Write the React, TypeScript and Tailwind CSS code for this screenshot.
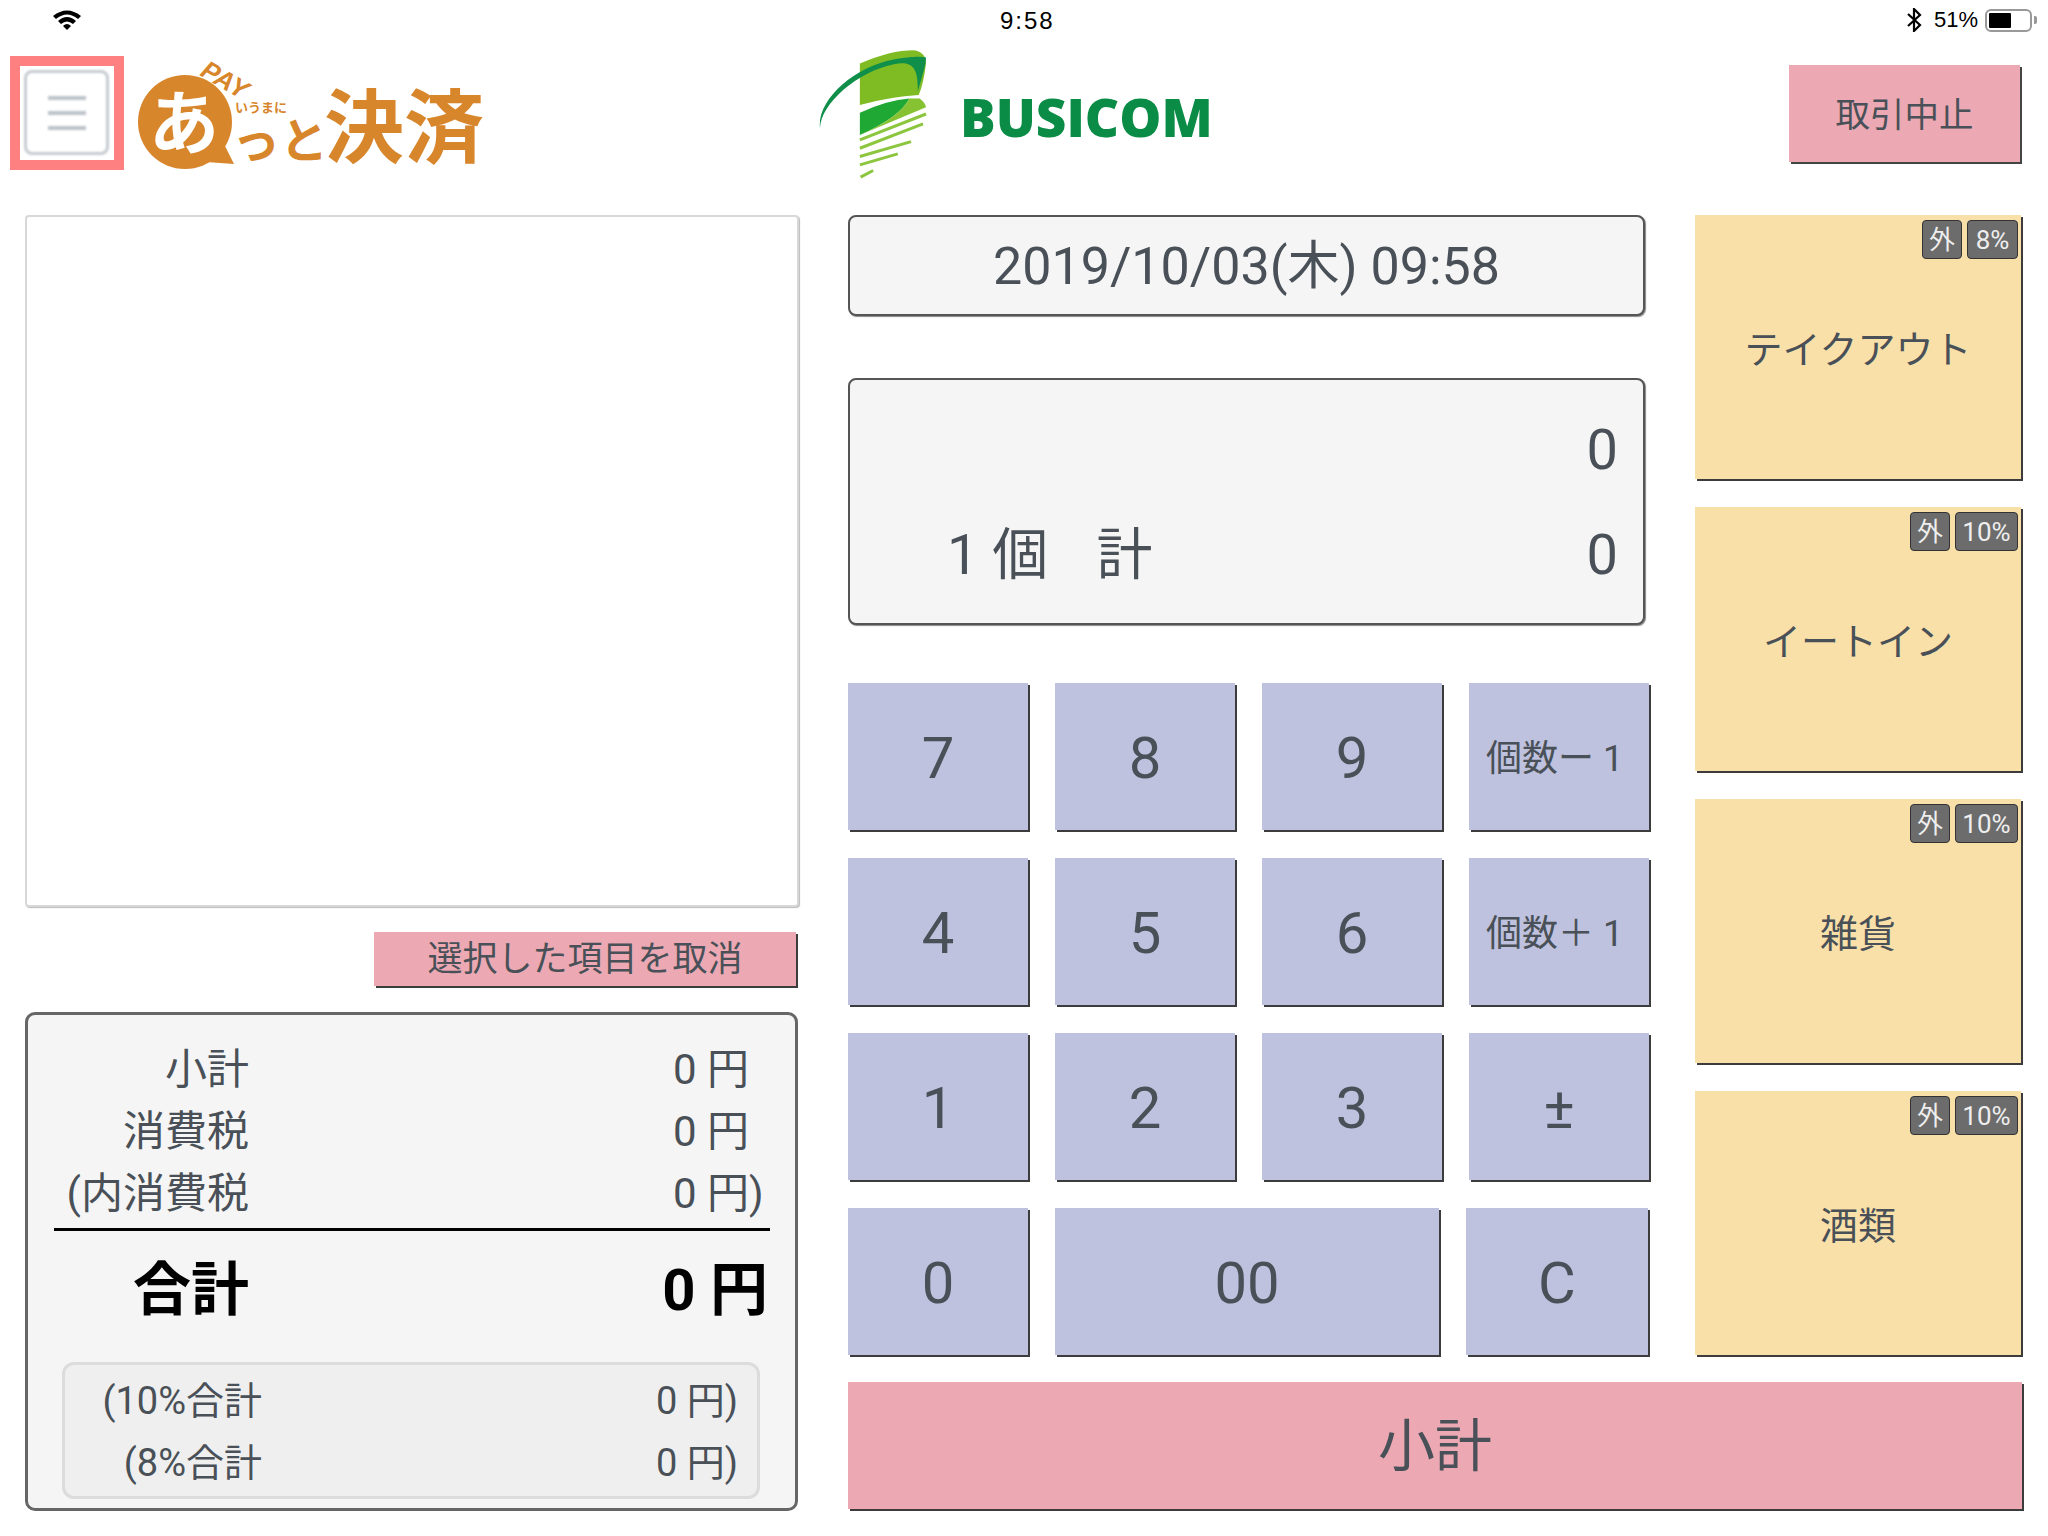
import React from "react";

const FONT = "font-['Roboto','Noto_Sans_CJK_JP',sans-serif]";

// キーパッド
const keyRows: string[][] = [
  ["7", "8", "9", "個数ー 1 "],
  ["4", "5", "6", "個数＋ 1 "],
  ["1", "2", "3", "±"],
];

// 商品カテゴリ
const categories = [
  { name: "テイクアウト", rate: "8%" },
  { name: "イートイン", rate: "10%" },
  { name: "雑貨", rate: "10%" },
  { name: "酒類", rate: "10%" },
];

const StatusBar = () => (
  <div className="relative flex h-[40px] items-center font-['Liberation_Sans',sans-serif] text-black">
    <svg className="ml-[53px]" width="28" height="22" viewBox="0 0 28 22">
      <path d="M0 7 Q14 -4 28 7 L25 10 Q14 1 3 10Z" fill="#000" />
      <path d="M5 12 Q14 4 23 12 L20 15 Q14 10 8 15Z" fill="#000" />
      <path d="M10 17 Q14 13 18 17 L14 21Z" fill="#000" />
    </svg>
    <div className="absolute left-[1000px] top-[9px] text-[24px] leading-[23px] tracking-[2px]">9:58</div>
    <div className="ml-auto flex items-center pr-[11px]">
      <svg width="16" height="24" viewBox="0 0 16 24" fill="none" stroke="#000" strokeWidth="2.2" className="mr-[2px]">
        <path d="M2 6 L14 17 L8 23 L8 1 L14 7 L2 18" />
      </svg>
      <span className="ml-[10px] text-[22px] leading-[24px]">51%</span>
      <div className="ml-[7px] flex h-[23px] w-[47px] items-center rounded-[6px] border-2 border-[#999] p-[2px]">
        <div className="h-full w-[22px] rounded-[1px] bg-black" />
      </div>
      <div className="ml-[2px] h-[8px] w-[3px] rounded-r-[2px] bg-[#999]" />
    </div>
  </div>
);

const PayLogo = () => (
  <svg width="350" height="130" viewBox="0 0 350 130" className="ml-[14px]">
    <text x="0" y="0" fontSize="26" fontWeight="700" fontStyle="italic" fill="#d8862c" transform="translate(61 19) rotate(30)" fontFamily="'Liberation Sans',sans-serif">
      PAY
    </text>
    <circle cx="47" cy="66" r="47" fill="#d8862c" />
    <path d="M68 106 L96 108 L86 88Z" fill="#d8862c" />
    <text x="11" y="93" fontSize="70" fontWeight="700" fill="#fff" fontFamily="'Noto Sans CJK JP',sans-serif">
      あ
    </text>
    <text x="97" y="56" fontSize="13" fontWeight="700" fill="#d8862c" fontFamily="'Noto Sans CJK JP',sans-serif">
      いうまに
    </text>
    <text x="94" y="102" fontSize="48" fontWeight="700" fill="#d8862c" fontFamily="'Noto Sans CJK JP',sans-serif">
      っと
    </text>
    <text x="186" y="100" fontSize="80" fontWeight="700" fill="#d8862c" fontFamily="'Noto Sans CJK JP',sans-serif">
      決済
    </text>
  </svg>
);

const BusicomLogo = () => (
  <div className="flex items-center">
    <svg width="108" height="130" viewBox="115 150 325 390">
      <path d="M238 190 Q330 150 400 150 Q437 155 437 190 Q430 250 415 285 Q330 290 238 315Z" fill="#7fbc24" />
      <path d="M118 385 C120 310 230 215 340 192 C390 182 415 195 412 275 C425 230 437 195 437 172 C425 168 390 168 340 178 C220 200 108 300 118 385Z" fill="#0f8f4a" />
      <path d="M238 338 Q320 300 387 295 Q360 350 238 405Z" fill="#1fa834" />
      <path d="M387 295 L418 295 Q437 310 437 322 L238 405 Q360 350 387 295Z" fill="#86c232" />
      <g stroke="#8cc63f" strokeWidth="9" fill="none">
        <path d="M238 420 L437 342" />
        <path d="M238 445 L428 372" />
        <path d="M238 470 L392 425" />
        <path d="M238 495 L352 462" />
        <path d="M240 532 L278 512" />
      </g>
    </svg>
    <span className="ml-[33px] mt-[4px] font-['Open_Sans',sans-serif] text-[53px] font-extrabold leading-[52px] text-[#0a8c46]">
      BUSICOM
    </span>
  </div>
);

const Header = () => (
  <div className="relative flex h-[135px] items-start">
    <div className="ml-[10px] mt-[16px] h-[114px] w-[114px] border-[10px] border-[#ff8080] p-[4px]">
      <div className="flex h-[85px] w-[85px] flex-col items-center justify-center gap-[11px] rounded-[8px] border-[3px] border-[#c6cbd1] blur-[1px]">
        <div className="h-[4px] w-[38px] bg-[#bcc3ca]" />
        <div className="h-[4px] w-[38px] bg-[#bcc3ca]" />
        <div className="h-[4px] w-[38px] bg-[#bcc3ca]" />
      </div>
    </div>
    <div className="mt-[16px]">
      <PayLogo />
    </div>
    <div className="ml-[331px] mt-[10px]">
      <BusicomLogo />
    </div>
    <button className="ml-auto mr-[28px] mt-[25px] flex h-[97px] w-[231px] items-center justify-center bg-[#eca9b3] pt-[5px] text-[34.5px] text-[#495057] shadow-[2px_2px_0_#444]">
      取引中止
    </button>
  </div>
);

const Key = ({ label, className }: { label: string; className: string }) => (
  <button className={`flex h-[147px] items-center justify-center whitespace-pre bg-[#bec2de] pt-[4px] text-[#495057] shadow-[2px_2px_0_#3c3c3c] ${className}`}>
    {label}
  </button>
);

const SummaryRow = ({ label, value }: { label: string; value: string }) => (
  <div className="flex h-[62px] items-center text-[42px] text-[#495057]">
    <div className="w-[195px] whitespace-nowrap text-right">{label}</div>
    <div className="ml-auto w-[96px] whitespace-nowrap">{value}</div>
  </div>
);

const SmallRow = ({ label, value }: { label: string; value: string }) => (
  <div className="flex h-[62px] items-center text-[38px] text-[#495057]">
    <div className="w-[197px] whitespace-nowrap text-right">{label}</div>
    <div className="ml-auto mr-[16px] w-[85px] whitespace-nowrap">{value}</div>
  </div>
);

export default function App() {
  return (
    <div className={`h-[1536px] w-[2048px] overflow-hidden bg-white ${FONT}`}>
      <StatusBar />
      <Header />
      <div className="flex pt-[40px]">
        {/* 左カラム */}
        <div className="ml-[25px] w-[774px]">
          <div className="h-[692px] rounded-[4px] border-2 border-[#d8d8d8] bg-white shadow-[1px_1px_1px_#bbb]" />
          <div className="mt-[25px] flex justify-end pr-[3px]">
            <button className="flex h-[54px] w-[422px] items-center justify-center bg-[#eca9b3] pt-[3px] text-[35px] text-[#495057] shadow-[2px_2px_0_#3c3c3c]">
              選択した項目を取消
            </button>
          </div>
          <div className="mt-[26px] h-[499px] w-[773px] rounded-[10px] border-[3px] border-[#666] bg-[#f5f5f5] px-[26px] pt-[23px]">
            <SummaryRow label="小計" value="0 円" />
            <SummaryRow label="消費税" value="0 円" />
            <SummaryRow label="(内消費税" value="0 円)" />
            <div className="mt-[4px] h-[3px] w-[716px] bg-black" />
            <div className="flex h-[118px] items-center pr-[1px] text-[58px] font-bold text-black">
              <div className="w-[195px] text-right">合計</div>
              <div className="ml-auto whitespace-nowrap">0 円</div>
            </div>
            <div className="mt-[13px] ml-[8px] h-[137px] w-[698px] rounded-[12px] border-[3px] border-[#dcdcdc] bg-[#efefef] pt-[5px]">
              <SmallRow label="(10%合計" value="0 円)" />
              <SmallRow label="(8%合計" value="0 円)" />
            </div>
          </div>
        </div>

        {/* 右エリア */}
        <div className="ml-[49px] w-[1174px]">
          <div className="flex">
            <div className="w-[804px]">
              <div className="flex h-[101px] w-[797px] items-center justify-center rounded-[8px] border-2 border-[#555] bg-[#f5f5f5] pt-[2px] text-[52px] text-[#495057] shadow-[1px_1px_1px_#888]">
                2019/10/03(木) 09:58
              </div>
              <div className="mt-[62px] flex h-[247px] w-[797px] flex-col rounded-[8px] border-2 border-[#555] bg-[#f5f5f5] px-[25px] pt-[37px] text-[56px] leading-[66px] text-[#495057] shadow-[1px_1px_1px_#888]">
                <div className="text-right">0</div>
                <div className="mt-[39px] flex justify-between pl-[72px]">
                  <span className="flex whitespace-pre">
                    1 個<span className="w-[48px]" />計
                  </span>
                  <span>0</span>
                </div>
              </div>
              <div className="mt-[58px] flex flex-col gap-[28px]">
                {keyRows.map((row, i) => (
                  <div key={i} className="flex gap-[27px]">
                    {row.map((label) => (
                      <Key
                        key={label}
                        label={label}
                        className={`w-[180px] ${label.length > 1 ? "text-[36px]" : "text-[58px]"}`}
                      />
                    ))}
                  </div>
                ))}
                <div className="flex gap-[27px]">
                  <Key label="0" className="w-[180px] text-[58px]" />
                  <Key label="00" className="w-[384px] text-[58px]" />
                  <Key label="C" className="w-[182px] text-[58px]" />
                </div>
              </div>
            </div>
            <div className="ml-[43px] flex flex-col gap-[28px]">
              {categories.map((cat) => (
                <button key={cat.name} className="relative flex h-[264px] w-[326px] items-center justify-center bg-[#f9e0a9] pt-[6px] text-[38px] text-[#495057] shadow-[2px_2px_0_#3c3c3c]">
                  {cat.name}
                  <div className="absolute right-[3px] top-[5px] flex gap-[5px] text-[26px] leading-none text-[#eee]">
                    <span className="flex h-[39px] w-[40px] items-center justify-center rounded-[4px] border border-[#333] bg-[#6c6c6c]">外</span>
                    <span className={`flex h-[39px] items-center justify-center rounded-[4px] border border-[#333] bg-[#6c6c6c] ${cat.rate === "8%" ? "w-[51px]" : "w-[63px]"}`}>{cat.rate}</span>
                  </div>
                </button>
              ))}
            </div>
          </div>
          <button className="mt-[27px] flex h-[127px] w-[1174px] items-center justify-center bg-[#eca9b3] pt-[2px] text-[57px] text-[#495057] shadow-[2px_2px_0_#3c3c3c]">
            小計
          </button>
        </div>
      </div>
    </div>
  );
}
